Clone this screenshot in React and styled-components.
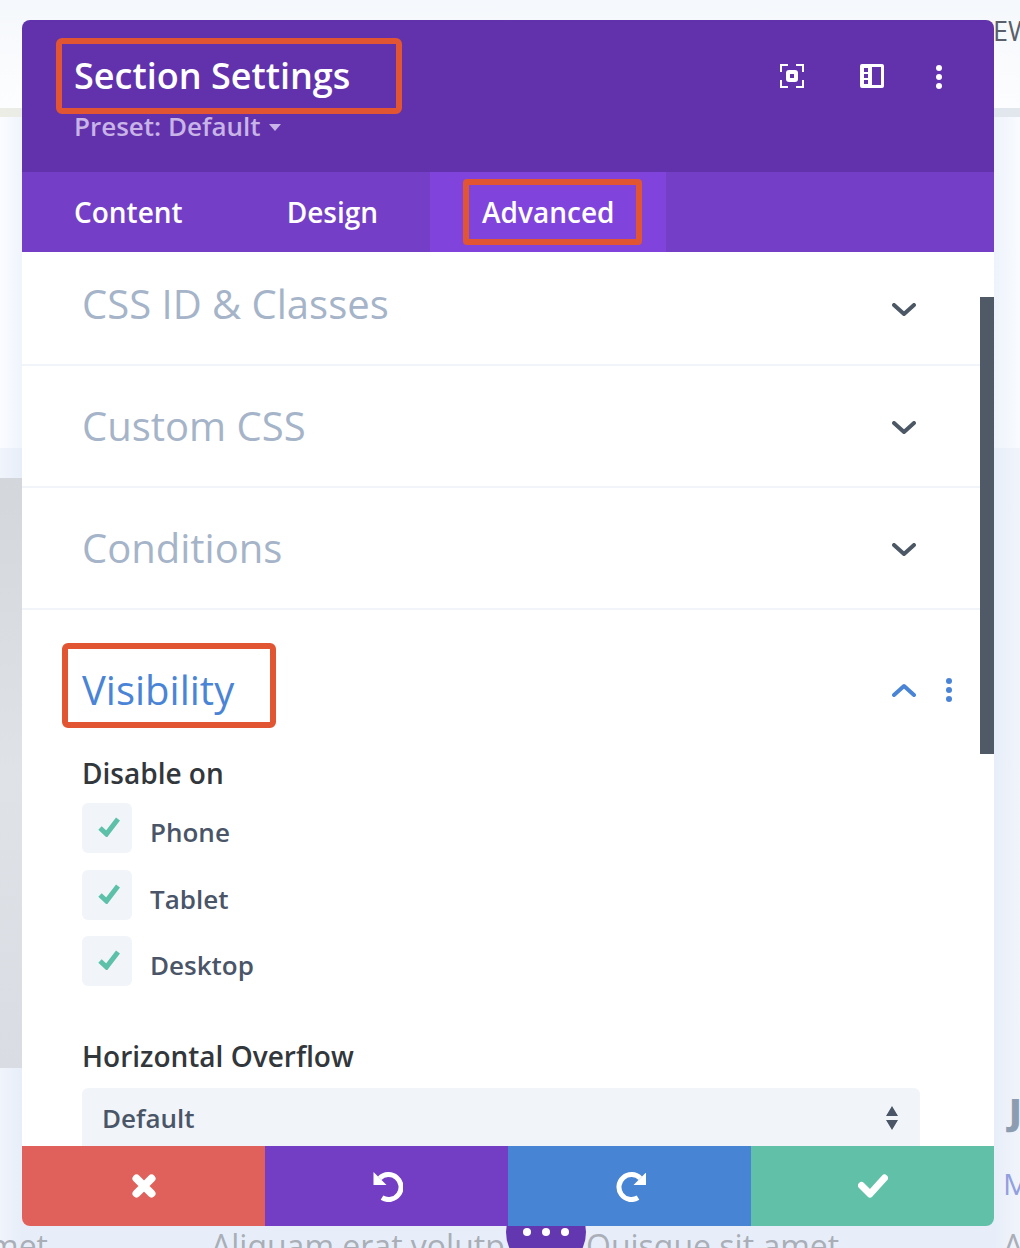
import styled, { createGlobalStyle } from 'styled-components';

const GlobalStyle = createGlobalStyle`
  html, body { margin: 0; padding: 0; background: #fff; }
  *, *::before, *::after { box-sizing: border-box; }
  body { font-family: "Open Sans", "Liberation Sans", sans-serif; }
`;

const Page = styled.div`
  position: relative;
  width: 1020px;
  height: 1248px;
  overflow: hidden;
  display: flex;
  flex-direction: column;
  background: #f8fafe;
`;

const TopBar = styled.div`
  height: 108px;
  padding: 11px 0 0 993px;
  font-size: 27px;
  line-height: 40px;
  white-space: nowrap;
  color: #5a5f6b;
  background: linear-gradient(180deg, #f5f8fc 0, #fcfdfe 100%);
`;

const TopRule = styled.div`
  height: 9px;
  background: linear-gradient(90deg, #eceee6 0, #e8ebe4 40px, #e0e6ed 960px, #e2e7ee 100%);
`;

const Hero = styled.div`
  height: 331px;
  background: linear-gradient(90deg, #fbfcff 0, #eff4fc 22px, #eef3fb 994px, #f9fbff 100%);
`;

const Lower = styled.div`
  flex: 1;
  display: grid;
  grid-template-columns: 1003px 1fr;
  grid-template-rows: 778px 22px;
  background: linear-gradient(90deg, #f0f4fb 0, #e7eef9 22px, #e7eef9 994px, #f1f4fa 100%);
`;

const ImageStrip = styled.div`
  width: 22px;
  height: 590px;
  margin-top: 30px;
  background: linear-gradient(180deg, #d3d7dc 0, #dfe3e8 50%, #d9dde3 100%);
`;

const SideText = styled.div`
  padding-top: 643px;
  display: flex;
  flex-direction: column;
  gap: 33px;
  white-space: nowrap;
`;

const SideInitial = styled.div`
  margin-left: ${(p) => (p.$bold ? 6 : 0)}px;
  font-size: ${(p) => (p.$bold ? 36 : 30)}px;
  line-height: 40px;
  font-weight: ${(p) => (p.$bold ? 800 : 400)};
  color: ${(p) => p.$color};
`;

const BottomRow = styled.div`
  grid-column: 1 / 3;
  display: grid;
  grid-template-columns: 213px 372px 418px 1fr;
  white-space: nowrap;
  font-size: 32px;
  line-height: 40px;
  color: #a9aeb7;
`;

const BottomText = styled.div`
  margin-left: ${(p) => p.$offset || 0}px;
`;

const DotsButton = styled.div`
  position: absolute;
  left: 506px;
  top: 1192px;
  width: 80px;
  height: 80px;
  border-radius: 50%;
  background: #6237b0;
  display: flex;
  align-items: center;
  justify-content: center;
  gap: 11px;
`;

const Dot = styled.span`
  width: 8px;
  height: 8px;
  border-radius: 50%;
  background: #fff;
`;

const Modal = styled.div`
  position: absolute;
  left: 22px;
  top: 20px;
  width: 972px;
  height: 1206px;
  border-radius: 8px;
  overflow: hidden;
  display: flex;
  flex-direction: column;
  background: #fff;
`;

const Header = styled.header`
  flex: none;
  height: 152px;
  padding: 18px 51px 0 34px;
  display: flex;
  justify-content: space-between;
  align-items: flex-start;
  background: #6232ac;
`;

const TitleBox = styled.div`
  width: 346px;
  height: 76px;
  padding-left: 13px;
  border: 6px solid #e25532;
  border-radius: 6px;
  display: flex;
  align-items: center;
`;

const Title = styled.h1`
  margin: 0 0 0 -1px;
  font-size: 36px;
  line-height: 50px;
  font-weight: 600;
  color: #fff;
`;

const Preset = styled.div`
  margin: -6px 0 0 18px;
  display: flex;
  align-items: center;
  gap: 8px;
  font-size: 26px;
  line-height: 36px;
  font-weight: 600;
  color: #c8b4e6;
`;

const Caret = styled.span`
  width: 0;
  height: 0;
  margin-top: 2px;
  border-left: 6px solid transparent;
  border-right: 6px solid transparent;
  border-top: 7px solid #c8b4e6;
`;

const HeaderIcons = styled.div`
  display: flex;
  align-items: center;
  gap: 56px;
  margin-top: 25px;
`;

const HeaderDots = styled.span`
  display: flex;
  margin: 2px 0 0 -5px;
`;

const Tabs = styled.nav`
  flex: none;
  height: 80px;
  display: flex;
  background: #743ec6;
`;

const Tab = styled.div`
  position: relative;
  padding: 0 ${(p) => (p.$active ? 51 : 52)}px 0 52px;
  display: flex;
  align-items: center;
  font-size: 28px;
  font-weight: 600;
  color: #fff;
  background: ${(p) => (p.$active ? '#8044dd' : 'transparent')};

  ${(p) =>
    p.$active &&
    `&::after {
      content: '';
      position: absolute;
      left: 33px;
      top: 7px;
      width: 179px;
      height: 66px;
      border: 6px solid #e25532;
      border-radius: 4px;
    }`}
`;

const Body = styled.div`
  position: relative;
  flex: 1;
  overflow: hidden;
`;

const Scrollbar = styled.div`
  position: absolute;
  right: 0;
  top: 45px;
  width: 14px;
  height: 457px;
  background: #4f5a66;
`;

const Row = styled.div`
  height: ${(p) => p.$height}px;
  padding: 0 78px 0 60px;
  display: flex;
  align-items: center;
  justify-content: space-between;
  border-bottom: 2px solid #f1f5f9;
`;

const RowTitle = styled.div`
  font-size: 40px;
  line-height: 54px;
  margin-top: ${(p) => p.$nudge || 0}px;
  color: #a5b4c8;
`;

const OpenSection = styled.section`
  padding: 33px 41px 0 40px;
`;

const OpenHeader = styled.div`
  display: flex;
  align-items: center;
  justify-content: space-between;
`;

const OpenTitleBox = styled.div`
  width: 214px;
  height: 85px;
  padding: 8px 0 0 14px;
  border: 6px solid #e25532;
  border-radius: 6px;
  display: flex;
  align-items: center;
`;

const OpenTitle = styled.div`
  font-size: 40px;
  line-height: 54px;
  color: #4a84d6;
`;

const OpenIcons = styled.div`
  display: flex;
  align-items: center;
  gap: 29px;
  margin-top: 8px;
`;

const Fields = styled.div`
  padding: 26px 33px 0 20px;
`;

const FieldLabel = styled.div`
  font-size: 28px;
  line-height: 38px;
  font-weight: 600;
  color: #32373c;
`;

const CheckList = styled.div`
  margin-top: 11px;
  display: flex;
  flex-direction: column;
  gap: 16.5px;
`;

const CheckRow = styled.label`
  display: flex;
  align-items: flex-start;
  gap: 18px;
`;

const CheckBox = styled.span`
  flex: none;
  width: 50px;
  height: 50px;
  padding: 14px 0 0 16px;
  border-radius: 6px;
  background: #f1f5f9;
`;

const CheckText = styled.span`
  margin-top: 10px;
  font-size: 26px;
  line-height: 38px;
  font-weight: 600;
  color: #4a5568;
`;

const OverflowField = styled.div`
  margin-top: 51px;
`;

const Select = styled.div`
  margin-top: 13px;
  height: 66px;
  padding: 0 22px 6px 20px;
  border-radius: 6px;
  display: flex;
  align-items: center;
  justify-content: space-between;
  font-size: 26px;
  font-weight: 600;
  color: #4a5568;
  background: #f1f5f9;
`;

const Footer = styled.footer`
  position: absolute;
  left: 0;
  right: 0;
  bottom: 0;
  height: 80px;
  display: grid;
  grid-template-columns: repeat(4, 1fr);
`;

const FooterButton = styled.button`
  border: 0;
  padding: 0;
  display: flex;
  align-items: center;
  justify-content: center;
  background: ${(p) => p.$bg};
`;

const ChevronSvg = styled.svg`
  flex: none;
  margin-top: ${(p) => (p.$up ? 0 : 4)}px;
`;

const FocusIcon = () => (
  <svg width="24" height="24" viewBox="0 0 24 24" fill="none">
    <path d="M1 8V1h7M16 1h7v7M23 16v7h-7M8 23H1v-7" stroke="#fff" strokeWidth="2" />
    <rect x="6" y="6" width="12" height="12" rx="3" fill="#fff" />
    <rect x="10" y="10" width="4" height="4" fill="#6232ac" />
  </svg>
);

const LayoutIcon = () => (
  <svg width="24" height="24" viewBox="0 0 24 24">
    <path
      fillRule="evenodd"
      fill="#fff"
      d="M2 0h20a2 2 0 0 1 2 2v20a2 2 0 0 1-2 2H2a2 2 0 0 1-2-2V2a2 2 0 0 1 2-2zM12 3v18h9V3zM4 4v4h4V4zM4 10v4h4v-4zM4 16v4h4v-4z"
    />
  </svg>
);

const VerticalDots = ({ color }) => (
  <svg width="8" height="24" viewBox="0 0 8 24" fill={color}>
    <circle cx="4" cy="3" r="3" />
    <circle cx="4" cy="12" r="3" />
    <circle cx="4" cy="21" r="3" />
  </svg>
);

const Chevron = ({ color, up }) => (
  <ChevronSvg $up={up} width="24" height="14" viewBox="0 0 24 14" fill="none">
    <path
      d={up ? 'M2 12l10-9 10 9' : 'M2 2l10 9 10-9'}
      stroke={color}
      strokeWidth="4"
      strokeLinecap="round"
      strokeLinejoin="round"
    />
  </ChevronSvg>
);

const TickIcon = () => (
  <svg width="22" height="20" viewBox="0 0 22 20" fill="none">
    <path d="M2 11l6.5 6L20 2" stroke="#5dc0a8" strokeWidth="5" />
  </svg>
);

const SortIcon = () => (
  <svg width="12" height="24" viewBox="0 0 12 24" fill="#4a5568">
    <path d="M6 0l6 10H0zM0 14h12L6 24z" />
  </svg>
);

const CloseIcon = () => (
  <svg width="26" height="26" viewBox="0 0 26 26" fill="none">
    <path d="M5.5 5.5l15 15M20.5 5.5l-15 15" stroke="#fff" strokeWidth="8" strokeLinecap="round" />
  </svg>
);

const UndoIcon = () => (
  <svg width="32" height="32" viewBox="-1.5 -1 32 32" fill="none">
    <path d="M7.2 7.2A12.5 12.5 0 1 1 9.5 26.7" stroke="#fff" strokeWidth="5" />
    <path d="M1 1v13h13z" fill="#fff" />
  </svg>
);

const RedoIcon = () => (
  <svg width="32" height="32" viewBox="-1.5 -1 32 32" fill="none">
    <path d="M24.8 7.2A12.5 12.5 0 1 0 22.5 26.7" stroke="#fff" strokeWidth="5" />
    <path d="M31 1v13H18z" fill="#fff" />
  </svg>
);

const SaveIcon = () => (
  <svg width="30" height="24" viewBox="0 0 30 24" fill="none">
    <path d="M3.5 11.5l8.5 8.5L26.5 4" stroke="#fff" strokeWidth="7" strokeLinecap="round" strokeLinejoin="round" />
  </svg>
);

const devices = ['Phone', 'Tablet', 'Desktop'];

const App = () => (
  <Page>
    <GlobalStyle />
    <TopBar>EW</TopBar>
    <TopRule />
    <Hero />
    <Lower>
      <ImageStrip />
      <SideText>
        <SideInitial $bold $color="#8c9db1">J</SideInitial>
        <SideInitial $color="#929fe0">M</SideInitial>
      </SideText>
      <BottomRow>
        <BottomText $offset={-11}>met</BottomText>
        <BottomText $offset={-2}>Aliquam erat volutpat</BottomText>
        <BottomText $offset={1}>Quisque sit amet</BottomText>
        <BottomText>A</BottomText>
      </BottomRow>
    </Lower>
    <DotsButton>
      <Dot />
      <Dot />
      <Dot />
    </DotsButton>

    <Modal>
      <Header>
        <div>
          <TitleBox>
            <Title>Section Settings</Title>
          </TitleBox>
          <Preset>
            Preset: Default
            <Caret />
          </Preset>
        </div>
        <HeaderIcons>
          <FocusIcon />
          <LayoutIcon />
          <HeaderDots>
            <VerticalDots color="#fff" />
          </HeaderDots>
        </HeaderIcons>
      </Header>
      <Tabs>
        <Tab>Content</Tab>
        <Tab>Design</Tab>
        <Tab $active>Advanced</Tab>
      </Tabs>
      <Body>
        <Scrollbar />
        <Row $height={114}>
          <RowTitle $nudge={-8}>CSS ID &amp; Classes</RowTitle>
          <Chevron color="#4c5866" />
        </Row>
        <Row $height={122}>
          <RowTitle>Custom CSS</RowTitle>
          <Chevron color="#4c5866" />
        </Row>
        <Row $height={122}>
          <RowTitle>Conditions</RowTitle>
          <Chevron color="#4c5866" />
        </Row>
        <OpenSection>
          <OpenHeader>
            <OpenTitleBox>
              <OpenTitle>Visibility</OpenTitle>
            </OpenTitleBox>
            <OpenIcons>
              <Chevron color="#4a84d6" up />
              <VerticalDots color="#4a84d6" />
            </OpenIcons>
          </OpenHeader>
          <Fields>
            <FieldLabel>Disable on</FieldLabel>
            <CheckList>
              {devices.map((device) => (
                <CheckRow key={device}>
                  <CheckBox>
                    <TickIcon />
                  </CheckBox>
                  <CheckText>{device}</CheckText>
                </CheckRow>
              ))}
            </CheckList>
            <OverflowField>
              <FieldLabel>Horizontal Overflow</FieldLabel>
              <Select>
                Default
                <SortIcon />
              </Select>
            </OverflowField>
          </Fields>
        </OpenSection>
        <Footer>
          <FooterButton $bg="#e0605b"><CloseIcon /></FooterButton>
          <FooterButton $bg="#743ec4"><UndoIcon /></FooterButton>
          <FooterButton $bg="#4884d4"><RedoIcon /></FooterButton>
          <FooterButton $bg="#60c0a8"><SaveIcon /></FooterButton>
        </Footer>
      </Body>
    </Modal>
  </Page>
);

export default App;
